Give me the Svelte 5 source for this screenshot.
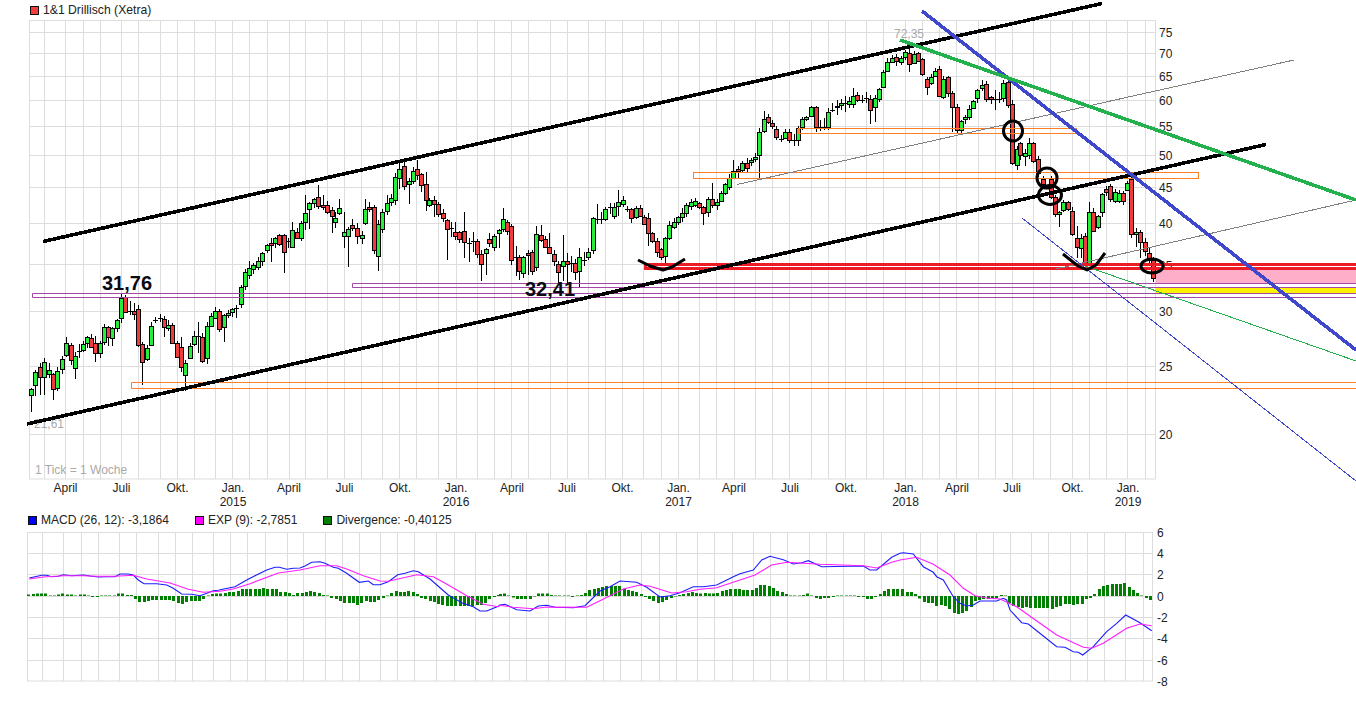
<script>
  // [x, top, bottom, colour (1 green, 0 red, 2 doji), high, low]; 0 / missing wick = derived
  const candles = [
    [31,389,395,1,0,412],[35,372,385,1,370,396],[40,367,377,0,0,395],[44,362,377,1,0,395],[49,370,374,1,363,0],[53,374,389,0,0,400],[57,371,388,1,0,0],[62,359,369,1,0,0],[66,343,355,1,337,0],[71,345,360,0,0,365],[75,356,368,1,0,379],[79,351,351,2,344,358],[83,344,350,1,0,0],[87,337,343,1,0,348],[91,338,347,0,0,0],[95,343,353,0,336,362],[100,343,353,1,0,0],[104,327,342,1,0,0],[108,327,337,0,0,346],[112,328,338,1,0,346],[117,320,328,1,0,0],[121,298,318,1,293,0],[125,297,312,0,0,0],[130,311,311,2,301,315],[134,311,314,0,303,320],[138,309,345,0,305,0],[142,344,362,0,0,385],[147,348,359,1,0,0],[151,326,345,1,0,0],[155,320,320,2,317,323],[160,318,318,2,314,322],[164,319,327,0,0,337],[168,325,328,1,320,0],[172,325,343,0,0,0],[177,343,357,0,0,0],[181,347,367,0,337,0],[185,363,375,1,0,391],[190,346,358,1,0,0],[194,336,344,1,331,0],[198,336,336,2,322,353],[202,337,361,0,0,363],[207,326,358,1,0,364],[211,316,326,1,0,0],[215,311,318,1,0,0],[219,311,329,0,309,0],[224,315,327,1,0,342],[228,313,315,1,310,0],[232,309,312,1,0,0],[236,308,308,2,305,318],[241,287,304,1,0,0],[245,272,286,1,0,290],[249,268,275,1,261,0],[253,265,269,1,0,274],[258,261,267,1,0,0],[262,253,261,1,0,0],
    [267,245,250,1,0,253],[271,243,245,0,238,262],[275,238,243,1,0,0],[279,235,244,0,0,0],[284,235,252,0,0,273],[288,241,243,2,0,0],[292,230,247,1,222,0],[297,232,238,0,0,0],[301,223,238,1,221,0],[305,213,222,1,195,230],[309,203,209,1,0,229],[314,199,203,1,0,0],[318,197,206,0,185,0],[323,205,207,0,195,0],[327,205,212,0,0,0],[332,210,216,0,0,233],[335,218,222,1,212,228],[339,208,213,1,199,0],[344,232,236,1,212,248],[348,229,236,1,0,267],[352,225,228,0,219,0],[357,228,236,0,223,244],[362,235,238,1,0,244],[365,209,223,1,199,0],[369,207,209,0,202,0],[374,207,250,0,0,0],[378,224,256,1,0,271],[382,212,229,1,0,0],[387,203,211,1,195,215],[391,198,202,1,0,206],[395,177,200,1,0,0],[399,169,178,1,162,189],[404,166,186,0,160,0],[409,181,184,1,0,204],[413,171,181,1,0,0],[417,169,175,0,160,0],[421,174,185,0,0,192],[426,184,200,0,172,211],[429,200,205,1,0,0],[434,200,204,0,0,217],[438,204,214,0,0,0],[443,213,218,0,0,222],[447,220,229,0,0,260],
    [451,228,232,2,222,237],[455,232,236,0,222,0],[459,232,239,0,0,0],[464,231,242,0,212,258],[469,243,243,2,238,262],[473,241,241,2,232,252],[477,241,254,0,0,0],[481,254,264,0,0,281],[486,249,253,1,0,275],[489,239,243,0,233,0],[494,236,247,1,0,0],[499,230,233,1,0,248],[503,219,229,1,208,0],[507,222,231,0,0,0],[511,226,260,0,0,0],[516,257,257,2,246,276],[519,257,271,0,0,280],[523,257,273,1,0,0],[528,253,255,0,0,275],[532,252,271,0,0,0],[536,234,267,1,226,0],[541,235,240,0,225,0],[545,239,247,0,0,0],[549,247,253,0,233,0],[554,254,261,0,0,0],[558,264,272,0,0,285],[563,261,266,1,235,281],[567,261,264,0,253,283],[571,263,263,2,256,272],[575,263,272,0,0,280],[579,257,271,1,248,287],[584,260,260,2,252,266],[588,252,257,1,0,0],[593,218,250,1,0,254],[597,219,219,2,204,224],[601,219,219,2,212,224],[605,209,219,1,0,0],[610,207,207,2,203,214],[614,207,216,1,0,0],[618,202,206,1,190,216],[623,200,204,1,0,0],[627,209,209,2,206,212],[631,209,218,0,0,0],[636,208,217,1,0,0],[640,208,216,0,0,0],[644,217,224,0,0,0],[648,218,233,0,213,246],[652,233,241,0,0,243],[657,241,252,0,0,257],[661,249,257,0,0,260],[665,238,256,1,0,263],[669,225,238,1,0,0],[674,222,227,1,0,0],[678,217,222,1,0,225],[682,213,217,1,208,0],[686,205,213,1,0,217],[691,202,206,1,199,0],[695,201,205,1,198,0],[699,203,207,0,0,0],[703,207,213,0,0,225],[708,199,212,1,197,0],[712,199,205,0,183,0],[717,202,205,1,0,210],[721,193,201,1,0,0],[725,184,193,1,0,195],[729,178,187,1,174,0],[733,171,178,1,160,0],[738,169,171,0,0,178],[742,163,170,1,0,0],[747,163,168,0,158,0],[751,160,162,1,0,0],[755,157,159,1,153,0],
    [759,132,155,1,0,180],[764,119,131,1,111,0],[768,117,122,0,114,0],[772,123,126,0,120,0],[776,129,137,0,0,140],[781,139,139,2,135,142],[785,132,138,1,129,0],[789,132,140,0,129,0],[794,140,140,2,134,146],[798,128,140,1,0,146],[802,119,127,1,0,0],[806,117,119,1,0,0],[811,107,116,1,106,0],[816,107,127,0,0,132],[820,127,127,2,120,131],[824,127,127,2,118,130],[828,112,127,1,0,130],[832,110,110,2,103,112],[837,106,107,0,100,115],[841,103,105,1,99,0],[845,103,103,2,96,112],[849,101,104,1,97,108],[853,96,104,1,88,0],[857,95,100,0,0,0],[862,100,100,2,95,103],[866,98,98,2,92,103],[870,99,110,0,0,124],[875,98,107,1,0,122],[879,89,99,1,0,0],[883,72,87,1,0,0],[887,62,71,1,0,0],[892,58,62,1,55,0],[896,57,61,0,54,0],[901,58,62,1,0,0],[905,52,57,1,0,0],[909,53,64,0,43,72],[914,54,63,1,0,0],[918,53,61,0,0,0],[922,59,74,0,0,0],[927,79,87,0,0,95],[931,77,83,1,0,0],[935,71,76,1,68,0],[939,69,96,0,66,0],[943,79,97,1,0,0],[948,77,93,0,0,0],[952,93,107,0,0,132],[957,107,130,0,0,133],[961,121,130,1,0,134],[965,117,119,1,0,124],[969,109,117,1,0,120],[973,101,108,1,0,0],[977,90,98,1,0,0],[982,85,88,1,80,0],[986,84,99,0,0,0],[991,97,99,0,0,0],[995,99,99,2,90,110],[999,99,99,2,92,103],[1003,83,98,1,0,0],[1008,82,105,0,0,0],
    [1012,104,163,0,0,165],[1017,149,165,1,0,170],[1020,143,155,0,0,0],[1025,153,156,1,0,166],[1029,143,155,1,138,0],[1033,143,161,0,142,0],[1038,159,173,0,0,177],[1043,179,184,0,176,0],[1051,179,197,0,176,0],[1055,197,214,0,0,217],[1059,212,214,1,0,227],[1063,202,210,1,0,0],[1068,202,209,0,0,0],[1072,211,234,0,0,0],[1077,238,247,0,226,258],[1081,238,248,1,0,258],[1085,236,263,0,0,0],[1089,212,263,1,202,0],[1093,212,231,0,208,0],[1098,216,227,1,0,229],[1102,194,212,1,0,0],[1106,189,192,0,186,0],[1110,186,199,0,0,0],[1115,192,201,1,0,203],[1119,193,201,1,0,203],[1123,193,201,0,0,205],[1127,183,190,1,0,0],[1131,179,234,0,0,0],[1136,232,234,1,0,247],[1140,232,242,0,230,258],[1145,242,251,0,238,0],[1149,253,260,0,248,0],[1153,260,278,0,0,282]
  ];

  const wick = (i, span) => 1 + Math.floor(Math.abs(Math.sin(i * 12.9898 + span) * 43758.5) % span);
  const bars = candles.map((c, i) => {
    const x = Math.round(c[0]);
    return {
      x, top: c[1], bottom: c[2], kind: c[3],
      hi: c[4] || c[1] - wick(i, 4),
      lo: c[5] || c[2] + wick(i + 3, 5)
    };
  });

  const mainV = [44.5,65.5,83.5,100.5,121.5,138.5,160.5,177.5,194.5,215.5,232.5,249.5,267.5,289.5,305.5,327.5,344.5,361.5,382.5,399.5,416.5,438.5,456.5,477.5,494.5,511.5,528.5,550.5,567.5,588.5,605.5,622.5,643.5,661.5,678.5,699.5,716.5,734.5,755.5,772.5,789.5,811.5,828.5,845.5,866.5,883.5,905.5,922.5,939.5,956.5,978.5,995.5,1012.5,1033.5,1050.5,1072.5,1089.5,1106.5,1127.5,1145.5];
  const mainH = [32.5,53.5,76.5,100.5,126.5,155.5,187.5,223.5,264.5,311.5,366.5,434.5];
  const priceLabels = [[75,37],[70,58],[65,81],[60,105],[55,131],[50,160],[45,192],[40,228],[35,270],[30,316],[25,371],[20,439]];
  const months = [[65.5,'April'],[121.5,'Juli'],[177.5,'Okt.'],[233,'Jan.'],[289,'April'],[344.5,'Juli'],[400,'Okt.'],[456,'Jan.'],[512,'April'],[567,'Juli'],[622.5,'Okt.'],[678.5,'Jan.'],[734,'April'],[790,'Juli'],[846,'Okt.'],[905.5,'Jan.'],[957,'April'],[1012,'Juli'],[1072.5,'Okt.'],[1128,'Jan.']];
  const years = [[233,'2015'],[456,'2016'],[678.5,'2017'],[905.5,'2018'],[1128,'2019']];

  const macdV = mainV.map((v) => v - 2);
  const macdH = [553.5,574.5,596.5,617.5,638.5,660.5];
  const macdLabels = [['6',537],['4',558],['2',579],['0',601],['-2',622],['-4',643],['-6',665],['-8',686]];

  const divA = [1.5,2,2.5,2.5,2.5,.5,.5,1.5,2.5,1.5,1.5,.5,1.5,1.5,.5,-1,-1,.5,.5,.5,.5,2.5,2.5,1,1,-3,-6,-6,-5,-4,-4,-4,-4,-4,-5,-7,-8,-6,-5,-5,-5,-3,.5,2,2.5,2.5,3,4,4,5,7,7,7,7,7,8,7,7,7,4,4,3,1,3,3,4,5,4,3,1,.5,-2,-3,-5,-7,-7,-7,-9,-7,-5,-6,-6,-4,-2,.5,3,5,4,4,5,4,2,-2,-3,-5,-6,-8,-9,-10,-10,-10,-10,-10,-10,-10,-9,-9,-7,-3,-1,1];
  const divB = [2,2.5,.5,-1.5,-3,-3,-3,-3,-.5,2.5,2.5,2.5,1,.5,.5,.5,.5,-1,.5,1,3,6,7,8,9,10,10,10,10,7,6,5,4,2,-1,-3,-5,-7,-6,-4,-2,-.5,1,2,3,4,3,2.5,3,2.5,2.5,3,5,6,7,7,7,6,6,6,8,11,11,10,8,5,4,2,.5,.5,.5,1,2.5,.5,-2,-3,-2,-2,-1,.5,.5,.5,.5,.5,-1,-1,-3,-3,-1,2,5,7,7,7];
  const divC = [7,4,4,2,-2.5,-6,-7,-7,-10,-9,-10,-13,-17,-18,-17,-15,-11,-5,-4,-3,-3,-2,-2,1,.5,-7,-10,-11,-12,-11,-12,-12,-12,-12,-12,-13,-11,-10,-8,-8,-9,-8,-8,-3,-2,2,7,10,11,12,12,12,13,9,6,3,.5,-2,-4];
  const STEP = 4.27;
  const divBars = [[29.3, divA], [500.7, divB], [903.3, divC]].flatMap(([start, arr]) =>
    arr.map((v, i) => ({ x: Math.round(start + i * STEP) - 2, y: v > 0 ? 596 - v : 596, h: Math.abs(v) }))
  );

  const path = (ox, oy, pts) => pts.map(([x, y]) => `${(ox + x / 3).toFixed(1)},${(oy + y / 3).toFixed(1)}`).join(' ');
  const macdLine = [
    path(0,505,[[88,219],[105,215],[125,211],[140,211],[155,215],[175,214],[190,209],[215,212],[250,210],[270,213],[295,216],[320,215],[345,215],[360,207],[385,207],[400,210],[415,225],[432,236],[470,236],[500,240],[520,250],[545,267],[575,268],[600,272],[620,265],[640,257],[655,256],[675,251],[705,245],[740,225],[765,212],[800,195],[825,187],[838,187],[860,193],[880,190],[900,189],[915,183],[935,172],[960,170],[975,175],[1000,187],[1015,190],[1040,205],[1078,232],[1105,228],[1120,239],[1140,239],[1165,230],[1193,209],[1215,205],[1240,197],[1255,200],[1290,222],[1345,270],[1385,293],[1420,305],[1440,318],[1460,318],[1495,304]]),
    path(500,525,[[0,240],[15,238],[50,254],[90,258],[115,243],[140,241],[165,247],[220,248],[255,242],[300,198],[330,185],[360,168],[410,172],[440,187],[480,216],[510,212],[540,203],[580,185],[610,185],[650,180],[700,155],[720,146],[760,135],[785,105],[810,94],[850,104],[880,117],[905,113],[925,107],[965,125],[1090,123],[1110,135],[1130,135],[1175,97]]),
    path(900,525,[[0,85],[10,83],[40,87],[70,125],[100,142],[110,155],[130,165],[160,215],[180,235],[200,243],[220,240],[240,228],[290,228],[310,220],[320,225],[330,255],[365,293],[385,297],[430,333],[470,365],[495,367],[520,380],[535,382],[548,390],[580,365],[620,320],[650,295],[677,270],[720,293],[755,317]])
  ].join(' ');
  const expLine = [
    path(0,505,[[88,222],[130,216],[190,212],[250,212],[290,214],[345,214],[400,211],[440,222],[510,234],[565,253],[610,262],[660,259],[700,252],[750,236],[835,204],[900,195],[960,182],[1010,182],[1040,192],[1090,212],[1140,228],[1165,229],[1250,209],[1300,215],[1345,240],[1400,272],[1450,298],[1495,305]]),
    path(500,525,[[0,241],[40,247],[100,251],[140,246],[260,247],[300,227],[370,192],[420,180],[450,184],[515,204],[560,200],[600,193],[650,188],[765,150],[815,120],[860,112],[960,118],[1090,122],[1130,129],[1175,112]]),
    path(900,525,[[0,105],[50,97],[100,118],[150,150],[190,190],[225,212],[260,219],[300,222],[350,245],[420,295],[470,330],[550,367],[575,370],[610,355],[680,310],[720,297],[755,302]])
  ].join(' ');
</script>

<div class="page">
  <div class="legend top">
    <span class="item"><i class="swatch stock"></i>1&amp;1 Drillisch (Xetra)</span>
  </div>

  <svg class="main" width="1356" height="490" viewBox="0 21 1356 490">
    <rect class="frame" x="29.5" y="20.5" width="1126" height="458.5" />
    {#each mainH as y}<line class="grid" x1="29.5" x2="1155.5" y1={y} y2={y} />{/each}
    {#each mainV as x}<line class="grid" x1={x} x2={x} y1="20.5" y2="479" />{/each}

    {#each priceLabels as [value, y]}<text class="axis" x="1159" {y}>{value}</text>{/each}
    {#each months as [x, name]}<text class="axis mid" {x} y="492">{name}</text>{/each}
    {#each years as [x, name]}<text class="axis mid" {x} y="506">{name}</text>{/each}

    <text class="note" x="894" y="38">72,35</text>
    <text class="note" x="34" y="428">21,61</text>
    <text class="note" x="35" y="474">1 Tick = 1 Woche</text>

    {#each bars as b}
      <line class="wick" x1={b.x + 0.5} x2={b.x + 0.5} y1={b.hi} y2={b.lo} />
      {#if b.kind === 2}
        <line class="wick" x1={b.x - 2} x2={b.x + 3} y1={b.top + 0.5} y2={b.top + 0.5} />
      {:else}
        <rect class={b.kind === 1 ? 'up' : 'down'} x={b.x - 1.5} y={b.top + 0.5} width="4" height={b.bottom - b.top} />
      {/if}
    {/each}

    <rect class="pink" x="1156" y="270" width="200" height="13" />
    <rect class="yellow" x="1156" y="288" width="200" height="5" />
    <path class="purple" d="M1356 283.5H352.5V287.5H1356M1356 293.5H32.5V297.5H1356" />
    <path class="orange" d="M1356 382.5H131.5V388.5H1356" />
    <rect class="orange" x="693.5" y="172.5" width="505" height="6" />
    <rect class="orange" x="798.5" y="128.5" width="278" height="5" />
    <path class="red" d="M1356 264.5H645.5V268.5H1356" />

    <line class="thin gray" x1="737" y1="184.5" x2="1294" y2="60" />
    <line class="thin gray" x1="1056" y1="269" x2="1356" y2="200" />
    <line class="thin blue" x1="1022" y1="218" x2="1356" y2="481" />
    <line class="thin green" x1="1085" y1="266" x2="1356" y2="361" />
    <line class="thick black" x1="43" y1="241.5" x2="1102" y2="3.5" />
    <line class="thick black" x1="27" y1="424" x2="1266" y2="144.5" />
    <line class="thick blue" x1="922" y1="11" x2="1356" y2="350" />
    <line class="thick green" x1="900" y1="40" x2="1356" y2="200" />

    <ellipse class="ring" cx="1013" cy="131" rx="9.5" ry="10" />
    <ellipse class="ring" cx="1047" cy="178" rx="10" ry="10" />
    <ellipse class="ring" cx="1050" cy="195" rx="11.5" ry="9.5" />
    <ellipse class="ring" cx="1152" cy="266" rx="11" ry="7" />
    <polyline class="ring" points="638,260 650,266 663,270 672,267 685,259" />
    <polyline class="ring" points="1063,254 1078,266 1087,270 1096,265 1105,253" />

    <text class="big" x="102" y="290">31,76</text>
    <text class="big" x="525" y="296">32,41</text>
  </svg>

  <div class="legend lower">
    <span class="item"><i class="swatch macd"></i>MACD (26, 12): -3,1864</span>
    <span class="item"><i class="swatch exp"></i>EXP (9): -2,7851</span>
    <span class="item"><i class="swatch div"></i>Divergence: -0,40125</span>
  </div>

  <svg class="panel" width="1356" height="172" viewBox="0 530 1356 172">
    <rect class="frame" x="27.5" y="532.5" width="1125" height="148.5" />
    {#each macdH as y}<line class="grid" x1="27.5" x2="1152.5" y1={y} y2={y} />{/each}
    {#each macdV as x}<line class="grid" x1={x} x2={x} y1="532.5" y2="681" />{/each}
    {#each macdLabels as [value, y]}<text class="axis" x="1157" {y}>{value}</text>{/each}
    {#each divBars as b}<rect class="hist" x={b.x} y={b.y} width="3" height={b.h} />{/each}
    <polyline class="macdline" points={macdLine} />
    <polyline class="expline" points={expLine} />
  </svg>
</div>

<style>
  :global(body) {
    margin: 0;
    overflow: hidden;
    background: #fff;
  }
  .page {
    width: 1356px;
    height: 702px;
    display: flex;
    flex-direction: column;
    font-family: "Liberation Sans", Arial, sans-serif;
    font-size: 12px;
    color: #222;
  }
  .legend {
    display: flex;
    align-items: center;
    height: 19px;
    line-height: 19px;
    white-space: nowrap;
  }
  .legend.top {
    height: 21px;
    padding: 0 0 1px 30px;
    box-sizing: border-box;
    font-size: 12.2px;
  }
  .legend.lower {
    padding-left: 28px;
    gap: 26px;
    height: 19px;
    font-size: 12.06px;
  }
  .item {
    display: flex;
    align-items: center;
    gap: 4px;
  }
  .swatch {
    display: block;
    width: 7px;
    height: 7px;
    border: 1px solid #111;
  }
  .stock { background: #f33e3e; }
  .macd { background: #0000ff; }
  .exp { background: #ff00ff; }
  .div { background: #007f00; }
  svg {
    display: block;
    overflow: visible;
    flex: none;
  }
  text {
    font-family: "Liberation Sans", Arial, sans-serif;
    font-size: 12px;
  }
  .axis { fill: #222; }
  .mid { text-anchor: middle; }
  .note { fill: #aaa; }
  .big { font-size: 20px; font-weight: bold; fill: #0a0a14; }
  .frame { fill: #fff; stroke: #ddd; stroke-width: 1; }
  .grid { stroke: #ddd; stroke-width: 1; }
  .wick { stroke: #000; stroke-width: 1; }
  .up, .down { stroke: #000; stroke-width: 1; }
  .up { fill: #26ee3a; }
  .down { fill: #f03c3c; }
  .pink { fill: #ffaec9; }
  .yellow { fill: #fff200; }
  .purple { fill: none; stroke: #a349a4; stroke-width: 1; }
  .orange { fill: none; stroke: #ff7f27; stroke-width: 1; }
  .red { fill: none; stroke: #ed1c24; stroke-width: 3; }
  .thin { stroke-width: 1; shape-rendering: crispEdges; }
  .thick { stroke-width: 3.6; shape-rendering: crispEdges; }
  .thick.black { stroke: #000; }
  .thick.blue { stroke: #3f48cc; }
  .thick.green { stroke: #22b14c; }
  .thin.gray { stroke: #7f7f7f; }
  .thin.blue { stroke: #3f48cc; }
  .thin.green { stroke: #22b14c; }
  .ring { fill: none; stroke: #000; stroke-width: 3; stroke-linejoin: round; }
  .hist { fill: #007f00; }
  .macdline { fill: none; stroke: #1c1cff; stroke-width: 1.1; }
  .expline { fill: none; stroke: #ff1cff; stroke-width: 1.1; }
</style>
